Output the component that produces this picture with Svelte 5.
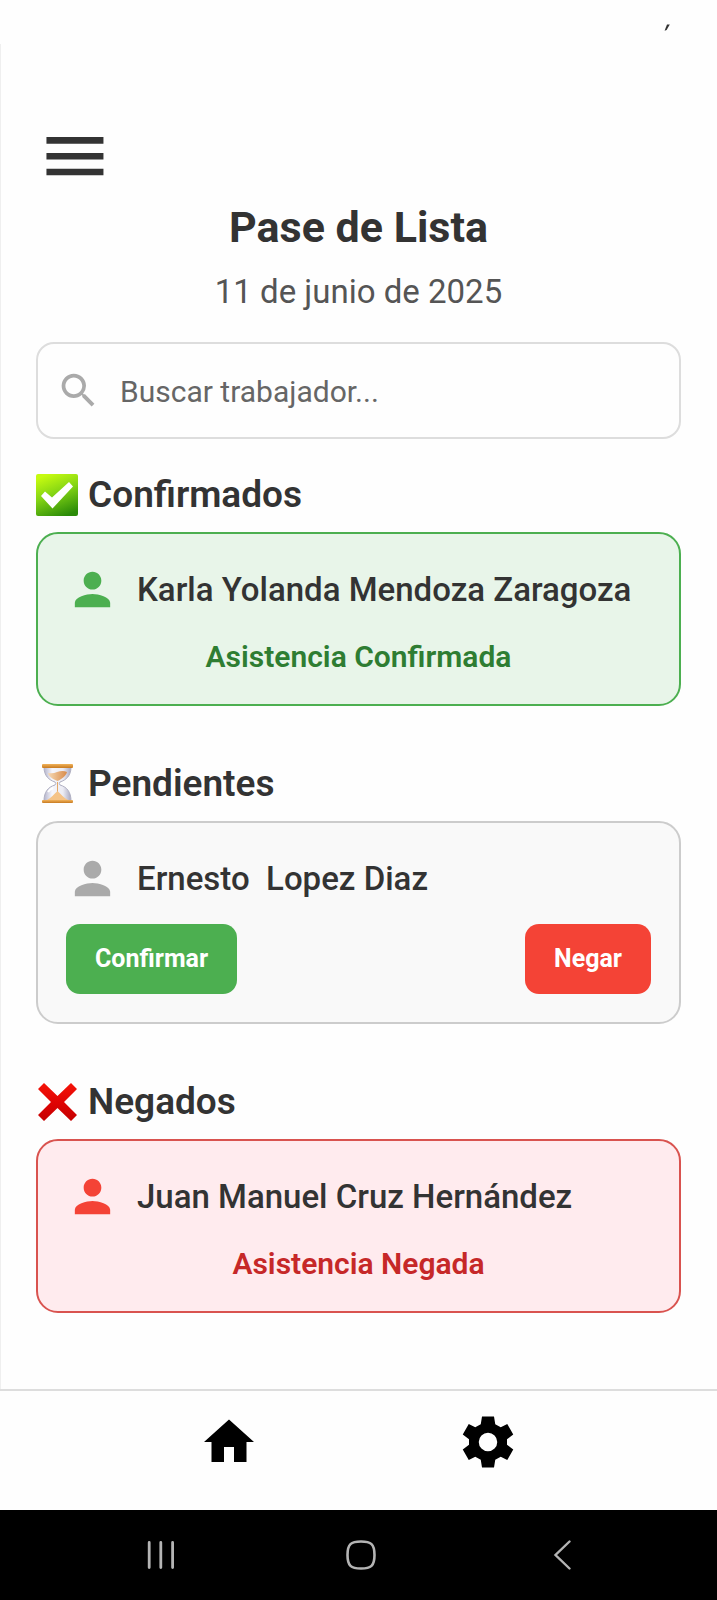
<script>
  let query = $state('');

  let workers = $state([
    { id: 1, name: 'Karla Yolanda Mendoza Zaragoza', status: 'confirmed' },
    { id: 2, name: 'Ernesto  Lopez Diaz', status: 'pending' },
    { id: 3, name: 'Juan Manuel Cruz Hernández', status: 'denied' }
  ]);

  const sections = [
    { status: 'confirmed', title: 'Confirmados', note: 'Asistencia Confirmada' },
    { status: 'pending', title: 'Pendientes', note: '' },
    { status: 'denied', title: 'Negados', note: 'Asistencia Negada' }
  ];

  function listFor(status) {
    const q = query.trim().toLowerCase();
    return workers.filter((w) => w.status === status && w.name.toLowerCase().includes(q));
  }
</script>

<div class="screen">
  <div class="status-bar">
    <svg width="6" height="8" viewBox="0 0 6 8" aria-hidden="true">
      <path d="M3 0.600 L5.800 0.600 L2.600 6 L0.600 6.800 Z" fill="#333" />
    </svg>
  </div>

  <main>
    <button class="icon-button menu" aria-label="Menú">
      <svg width="76" height="76" viewBox="0 0 24 24" aria-hidden="true">
        <path d="M3.300 17.800h18v-2.100h-18zm0-5h18v-2.100h-18zm0-7.100v2.100h18v-2.100z" fill="#333" />
      </svg>
    </button>

    <h1>Pase de Lista</h1>
    <p class="date">11 de junio de 2025</p>

    <label class="search">
      <svg width="45" height="45" viewBox="0 0 24 24" aria-hidden="true">
        <path
          d="M15.5 14h-.79l-.28-.27A6.471 6.471 0 0 0 16 9.500 6.500 6.500 0 1 0 9.500 16c1.610 0 3.090-.590 4.230-1.570l.270.280v.790l5 4.990L20.490 19l-4.990-5zm-6 0C7.010 14 5 11.990 5 9.500S7.010 5 9.500 5 14 7.010 14 9.500 11.990 14 9.500 14z"
          fill="#aaa"
        />
      </svg>
      <input type="text" placeholder="Buscar trabajador..." aria-label="Buscar trabajador" bind:value={query} />
    </label>

    {#each sections as section (section.status)}
      <section>
        <h2>
          {#if section.status === 'confirmed'}
            <svg width="42" height="42" viewBox="0 0 42 42" aria-hidden="true">
              <defs>
                <linearGradient id="check-bg" x1="0.3" y1="0" x2="0.7" y2="1">
                  <stop offset="0" stop-color="#c6fb10" />
                  <stop offset="0.45" stop-color="#83d414" />
                  <stop offset="1" stop-color="#2a8a08" />
                </linearGradient>
              </defs>
              <rect width="42" height="42" rx="2" fill="url(#check-bg)" />
              <path d="M5 22 L9 17.500 L16 23.500 L33 8 L37 12.500 L16.500 34.500 Z" fill="#fff" />
            </svg>
          {:else if section.status === 'pending'}
            <svg width="42" height="42" viewBox="0 0 42 42" aria-hidden="true">
              <defs>
                <linearGradient id="glass" x1="0" x2="1">
                  <stop offset="0" stop-color="#b4b4cc" />
                  <stop offset="0.3" stop-color="#f6f6fb" />
                  <stop offset="0.7" stop-color="#ececf4" />
                  <stop offset="1" stop-color="#a8a8c0" />
                </linearGradient>
                <linearGradient id="sand" x1="0" x2="1">
                  <stop offset="0" stop-color="#f6d9b4" />
                  <stop offset="1" stop-color="#d98b4a" />
                </linearGradient>
                <linearGradient id="wood" x1="0" y1="0" x2="0" y2="1">
                  <stop offset="0" stop-color="#f0b25a" />
                  <stop offset="1" stop-color="#c87a20" />
                </linearGradient>
              </defs>
              <path
                d="M8 4 H35 C35 13 30 17 24 19 Q22.500 20.500 24 22 C31 24 35 29 35 38 H8 C8 29 12 24 19 22 Q20.500 20.500 19 19 C13 17 8 13 8 4 Z"
                fill="url(#glass)"
                stroke="#b0b0c2"
              />
              <path d="M12 10 Q17 11 21 9 Q27 7 31 9 C30 13 26 16 21.500 18 C17 16 13 14 12 10 Z" fill="url(#sand)" />
              <path d="M21.500 19 V29" stroke="#e3a868" stroke-width="1" />
              <path d="M11 37 C15 35 18 31 21.500 28 C25 31 28 35 32 37 Z" fill="#f5c387" />
              <path d="M12 29 Q14 26 17 25" stroke="#fff" stroke-width="2" fill="none" />
              <rect x="6" y="1" width="31" height="4" rx="1" fill="url(#wood)" />
              <rect x="6" y="37" width="31" height="3" rx="1" fill="url(#wood)" />
            </svg>
          {:else}
            <svg width="42" height="42" viewBox="0 0 42 42" aria-hidden="true">
              <defs>
                <linearGradient id="cross" x1="0" y1="0" x2="0" y2="1">
                  <stop offset="0" stop-color="#f51408" />
                  <stop offset="0.5" stop-color="#e00404" />
                  <stop offset="1" stop-color="#c40000" />
                </linearGradient>
              </defs>
              <path
                d="M8 2 L21.500 15 L35 2 L41 8 L28 21 L41 34 L35 40 L21.500 27 L8 40 L2 34 L15 21 L2 8 Z"
                fill="url(#cross)"
              />
            </svg>
          {/if}
          <span>{section.title}</span>
        </h2>

        {#each listFor(section.status) as worker (worker.id)}
          <article class="card {section.status}">
            <div class="person">
              <svg width="53" height="53" viewBox="0 0 24 24" aria-hidden="true">
                <path
                  d="M12 12c2.210 0 4-1.790 4-4s-1.790-4-4-4-4 1.790-4 4 1.790 4 4 4zm0 2c-2.670 0-8 1.340-8 4v2h16v-2c0-2.660-5.330-4-8-4z"
                  fill="currentColor"
                />
              </svg>
              <span class="name">{worker.name}</span>
            </div>
            {#if section.status === 'pending'}
              <div class="actions">
                <button class="confirm" onclick={() => (worker.status = 'confirmed')}>Confirmar</button>
                <button class="deny" onclick={() => (worker.status = 'denied')}>Negar</button>
              </div>
            {:else}
              <p class="note">{section.note}</p>
            {/if}
          </article>
        {/each}
      </section>
    {/each}
  </main>

  <nav class="tabs" aria-label="Principal">
    <button class="icon-button" aria-label="Inicio">
      <svg width="60" height="60" viewBox="0 0 24 24" aria-hidden="true">
        <path d="M10 20v-6h4v6h5v-8h3L12 3 2 12h3v8z" fill="#000" />
      </svg>
    </button>
    <button class="icon-button" aria-label="Ajustes">
      <svg width="60" height="60" viewBox="0 0 24 24" aria-hidden="true">
        <path
          fill-rule="evenodd"
          d="M9.600 1.800H14.400L14.900 4.900L17.100 6.100L19.700 4.800L22.100 9L19.600 10.900V13.100L22.100 15L19.700 19.200L17.100 17.900L14.900 19.100L14.400 22.200H9.600L9.100 19.100L6.900 17.900L4.300 19.200L1.900 15L4.400 13.100V10.900L1.900 9L4.300 4.800L6.900 6.100L9.100 4.900Z M12 8.300a3.700 3.700 0 1 0 0 7.400a3.700 3.700 0 1 0 0-7.400z"
          fill="#000"
        />
      </svg>
    </button>
  </nav>

  <div class="system-bar">
    <button class="icon-button" aria-label="Recientes">
      <svg width="30" height="30" viewBox="0 0 30 30" fill="none" stroke="#b4b4b4" stroke-width="2.800" stroke-linecap="round" aria-hidden="true">
        <path d="M3.200 2.500v25M14.800 2.500v25M26.600 2.500v25" />
      </svg>
    </button>
    <button class="icon-button" aria-label="Pantalla de inicio">
      <svg width="30" height="30" viewBox="0 0 30 30" fill="none" stroke="#b4b4b4" stroke-width="2.600" aria-hidden="true">
        <path d="M15 1.500 C25 1.500 28.500 4 28.500 15 C28.500 26 25 28.500 15 28.500 C5 28.500 1.500 26 1.500 15 C1.500 4 5 1.500 15 1.500 Z" />
      </svg>
    </button>
    <button class="icon-button" aria-label="Atrás">
      <svg width="30" height="30" viewBox="0 0 30 30" fill="none" stroke="#b4b4b4" stroke-width="2.400" stroke-linecap="round" aria-hidden="true">
        <path d="M22.500 1.500L8.500 15l14 13.500" />
      </svg>
    </button>
  </div>
</div>

<style>
  :global(body) {
    margin: 0;
    background: #fefefe;
  }

  .screen {
    display: flex;
    flex-direction: column;
    min-height: 100vh;
    font-family: Roboto, 'Liberation Sans', sans-serif;
    color: #333;
  }

  .status-bar {
    display: flex;
    justify-content: flex-end;
    height: 44px;
    box-sizing: border-box;
    padding: 24px 47px 0 0;
  }

  main {
    flex: 1;
    display: flex;
    flex-direction: column;
    padding: 75px 36px 0 35px;
    border-left: 1px solid #efefef;
  }

  svg {
    display: block;
    flex: none;
  }

  button {
    border: 0;
    font-family: inherit;
    cursor: pointer;
  }

  .icon-button {
    padding: 0;
    background: none;
  }

  .menu {
    align-self: flex-start;
  }

  h1,
  h2,
  p {
    margin: 0;
  }

  h1 {
    margin-top: 6px;
    font-size: 43px;
    line-height: 52px;
    font-weight: 700;
    text-align: center;
  }

  .date {
    margin-top: 19px;
    font-size: 33px;
    line-height: 40px;
    text-align: center;
    color: #555;
  }

  .search {
    display: flex;
    align-items: center;
    gap: 19px;
    height: 97px;
    box-sizing: border-box;
    margin: 30px 0 35px;
    padding: 0 18px;
    border: 2px solid #ddd;
    border-radius: 18px;
  }

  .search input {
    flex: 1;
    min-width: 0;
    padding: 2px 0 0;
    border: 0;
    outline: 0;
    background: none;
    font-family: inherit;
    font-size: 30px;
    color: #333;
  }

  .search input::placeholder {
    color: #666;
    opacity: 1;
  }

  section {
    display: flex;
    flex-direction: column;
    gap: 16px;
    margin-bottom: 57px;
  }

  h2 {
    display: flex;
    align-items: center;
    gap: 10px;
    font-size: 37px;
    line-height: 42px;
    font-weight: 600;
  }

  .card {
    display: flex;
    flex-direction: column;
    gap: 19px;
    padding: 29px 28px 28px;
    border: 2px solid;
    border-radius: 22px;
  }

  .card.confirmed {
    color: #4caf50;
    background: #e8f5e9;
  }

  .card.pending {
    color: #aaa;
    border-color: #ccc;
    background: #f9f9f9;
  }

  .card.denied {
    color: #f44336;
    border-color: #d9534f;
    background: #ffebee;
  }

  .person {
    display: flex;
    align-items: center;
    gap: 18px;
  }

  .name {
    font-size: 33px;
    line-height: 40px;
    font-weight: 500;
    color: #333;
    white-space: pre-wrap;
  }

  .note {
    padding-top: 2px;
    font-size: 30px;
    line-height: 39px;
    font-weight: 600;
    text-align: center;
  }

  .confirmed .note {
    color: #2e7d32;
  }

  .denied .note {
    color: #c62828;
  }

  .actions {
    display: flex;
    justify-content: space-between;
  }

  .actions button {
    padding: 20px 29px;
    border-radius: 14px;
    font-size: 25px;
    line-height: 30px;
    font-weight: 700;
    color: #fff;
  }

  .confirm {
    background: #4caf50;
  }

  .deny {
    background: #f44336;
  }

  .tabs {
    display: flex;
    justify-content: space-evenly;
    padding: 21px 0 38px;
    border-top: 2px solid #ddd;
  }

  .system-bar {
    display: grid;
    grid-template-columns: repeat(3, 1fr);
    justify-items: center;
    padding: 30px 55px 30px 61px;
    background: #000;
  }
</style>
